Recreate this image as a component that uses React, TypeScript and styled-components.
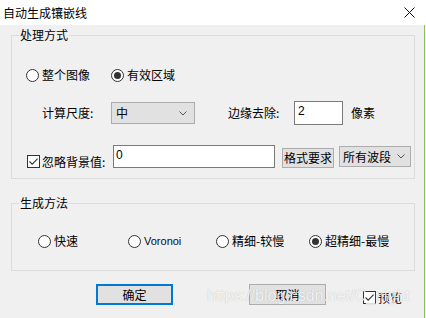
import React from 'react';
import styled, { createGlobalStyle } from 'styled-components';

const GlobalStyle = createGlobalStyle`
  html, body {
    margin: 0;
    padding: 0;
    background: #ffffff;
  }

  body {
    font-family: "Noto Sans CJK SC", "Microsoft YaHei", sans-serif;
    font-size: 12px;
    color: #000;
  }
`;

export default function App() {
  return (
    <Window>
      <GlobalStyle />

      {/* title bar */}
      <TitleBar>
        <Title>自动生成镶嵌线</Title>
        <svg width="11" height="11" viewBox="0 0 11 11">
          <path d="M0.5 0.5 L10.5 10.5 M10.5 0.5 L0.5 10.5" stroke="#111" strokeWidth="1" fill="none" />
        </svg>
      </TitleBar>

      <Body>
        {/* 处理方式 */}
        <Group>
          <Legend>处理方式</Legend>

          <Row $top={22} $height={20} $left={14}>
            <Option>
              <Radio />
              <Text>整个图像</Text>
            </Option>
            <Option $ml={21}>
              <Radio $checked />
              <Text>有效区域</Text>
            </Option>
          </Row>

          <Row $top={16} $height={24} $left={30}>
            <FieldLabel $w={69}>计算尺度:</FieldLabel>
            <Select $w={84} $h={22}>
              <span>中</span>
              <Chevron />
            </Select>
            <FieldLabel $w={66} $ml={33}>边缘去除:</FieldLabel>
            <TextBox $w={49} $h={24}>2</TextBox>
            <Text $ml={8}>像素</Text>
          </Row>

          <Row $top={20} $height={23} $left={15}>
            <CheckOption $drop={10}>
              <CheckBox checked />
              <FieldLabel $w={71}>忽略背景值:</FieldLabel>
            </CheckOption>
            <TextBox $w={162} $h={23} $pad={2}>0</TextBox>
            <SmallButton>格式要求</SmallButton>
            <Select $w={72} $h={21} $ml={5} $padL={3} $padR={5}>
              <span>所有波段</span>
              <Chevron />
            </Select>
          </Row>
        </Group>

        {/* 生成方法 */}
        <Group $mt={16} $pb={19}>
          <Legend>生成方法</Legend>
          <Row $top={20} $height={20} $left={26}>
            <Option $w={90}>
              <Radio />
              <Text>快速</Text>
            </Option>
            <Option $w={88}>
              <Radio />
              <Latin>Voronoi</Latin>
            </Option>
            <Option $w={93}>
              <Radio />
              <Text>精细-较慢</Text>
            </Option>
            <Option>
              <Radio $checked />
              <Text>超精细-最慢</Text>
            </Option>
          </Row>
        </Group>

        {/* buttons */}
        <Footer>
          <DialogButton $default>确定</DialogButton>
          <DialogButton $ml={76}>取消</DialogButton>
          <CheckOption $drop={6} $ml={37}>
            <CheckBox checked />
            <Text>预览</Text>
          </CheckOption>
        </Footer>
      </Body>

      <Watermark>https://blog.csdn.net/C_night</Watermark>
    </Window>
  );
}

function Radio({ $checked }: { $checked?: boolean }) {
  return <RadioCircle $checked={$checked} />;
}

function CheckBox({ checked }: { checked?: boolean }) {
  return (
    <CheckSquare>
      {checked && (
        <svg width="11" height="11" viewBox="0 0 11 11">
          <path d="M1.5 5.5 L4.2 8.2 L9.6 2.6" stroke="#333" strokeWidth="1.1" fill="none" />
        </svg>
      )}
    </CheckSquare>
  );
}

function Chevron() {
  return (
    <svg width="8" height="5" viewBox="0 0 8 5">
      <path d="M0.5 0.5 L4 4 L7.5 0.5" stroke="#555" strokeWidth="1" fill="none" />
    </svg>
  );
}

const Window = styled.div`
  position: relative;
  width: 425px;
  height: 318px;
  display: flex;
  flex-direction: column;
  overflow: hidden;
`;

const TitleBar = styled.div`
  flex: none;
  height: 25px;
  padding: 0 10px 0 3px;
  background: #ffffff;
  display: flex;
  align-items: center;
  justify-content: space-between;
`;

const Title = styled.span`
  font-size: 12px;
  line-height: 16px;
`;

const Body = styled.div`
  flex: 1;
  padding: 2px 0 0 11px;
  background: #f0f0f0;
  border-right: 1px solid #86c25a;
  display: flex;
  flex-direction: column;
`;

const Group = styled.fieldset<{ $mt?: number; $pb?: number }>`
  box-sizing: border-box;
  width: 404px;
  min-width: 0;
  margin: ${p => p.$mt || 0}px 0 0 0;
  padding: 0 0 ${p => (p.$pb === undefined ? 10 : p.$pb)}px 0;
  border: 1px solid #dcdcdc;
`;

const Legend = styled.legend`
  margin-left: 7px;
  padding: 0 1px;
  font-size: 12px;
  line-height: 16px;
`;

const Row = styled.div<{ $top: number; $height: number; $left: number }>`
  height: ${p => p.$height}px;
  margin-top: ${p => p.$top}px;
  padding-left: ${p => p.$left}px;
  display: flex;
  align-items: center;
`;

const Option = styled.label<{ $ml?: number; $w?: number }>`
  flex: none;
  width: ${p => (p.$w ? `${p.$w}px` : 'auto')};
  margin-left: ${p => p.$ml || 0}px;
  display: flex;
  align-items: center;
  gap: 3px;
`;

const CheckOption = styled.label<{ $drop?: number; $ml?: number }>`
  flex: none;
  margin-top: ${p => p.$drop || 0}px;
  margin-left: ${p => p.$ml || 0}px;
  display: flex;
  align-items: center;
  gap: 2px;
`;

const Text = styled.span<{ $ml?: number }>`
  margin-left: ${p => p.$ml || 0}px;
  font-size: 12px;
  line-height: 16px;
  white-space: nowrap;
`;

const Latin = styled.span`
  font-family: "Liberation Sans", Arial, sans-serif;
  font-size: 11px;
  line-height: 16px;
  color: #0a0a2a;
`;

const FieldLabel = styled.span<{ $w: number; $ml?: number }>`
  flex: none;
  width: ${p => p.$w}px;
  margin-left: ${p => p.$ml || 0}px;
  font-size: 12px;
  line-height: 16px;
  white-space: nowrap;
`;

const RadioCircle = styled.span<{ $checked?: boolean }>`
  flex: none;
  box-sizing: border-box;
  width: 13px;
  height: 13px;
  border: 1px solid #333;
  border-radius: 50%;
  background: #fff;
  display: flex;
  align-items: center;
  justify-content: center;

  &::after {
    content: '';
    width: 7px;
    height: 7px;
    border-radius: 50%;
    background: #333;
    display: ${p => (p.$checked ? 'block' : 'none')};
  }
`;

const CheckSquare = styled.span`
  flex: none;
  box-sizing: border-box;
  width: 13px;
  height: 13px;
  border: 1px solid #333;
  background: #fff;
  display: flex;
  align-items: center;
  justify-content: center;
`;

const Select = styled.div<{ $w: number; $h: number; $ml?: number; $padL?: number; $padR?: number }>`
  flex: none;
  box-sizing: border-box;
  width: ${p => p.$w}px;
  height: ${p => p.$h}px;
  margin-left: ${p => p.$ml || 0}px;
  padding: 0 ${p => (p.$padR === undefined ? 7 : p.$padR)}px 0 ${p => (p.$padL === undefined ? 4 : p.$padL)}px;
  border: 1px solid #adadad;
  background: #e1e1e1;
  display: flex;
  align-items: center;
  justify-content: space-between;
  font-size: 12px;
  line-height: 16px;
`;

const TextBox = styled.div<{ $w: number; $h: number; $pad?: number }>`
  flex: none;
  box-sizing: border-box;
  width: ${p => p.$w}px;
  height: ${p => p.$h}px;
  padding: 1px 0 0 ${p => (p.$pad === undefined ? 3 : p.$pad)}px;
  border: 1px solid #7a7a7a;
  background: #fff;
  font-family: "Liberation Sans", Arial, sans-serif;
  font-size: 12px;
  line-height: 16px;
  color: #000;
`;

const SmallButton = styled.div`
  flex: none;
  box-sizing: border-box;
  width: 52px;
  height: 20px;
  margin: 2px 0 0 7px;
  border: 1px solid #adadad;
  background: #e1e1e1;
  display: flex;
  align-items: center;
  justify-content: center;
  font-size: 12px;
  line-height: 16px;
`;

const Footer = styled.div`
  height: 21px;
  margin-top: 13px;
  padding-left: 85px;
  display: flex;
  align-items: center;
`;

const DialogButton = styled.div<{ $default?: boolean; $ml?: number }>`
  flex: none;
  box-sizing: border-box;
  width: 77px;
  height: 21px;
  margin-left: ${p => p.$ml || 0}px;
  border: ${p => (p.$default ? '2px solid #0078d7' : '1px solid #adadad')};
  background: #e1e1e1;
  display: flex;
  align-items: center;
  justify-content: center;
  font-size: 12px;
  line-height: 16px;
`;

const Watermark = styled.div`
  position: absolute;
  left: 207px;
  top: 287px;
  font-family: "Liberation Sans", Arial, sans-serif;
  font-size: 16px;
  line-height: 18px;
  color: rgba(255, 255, 255, 0.85);
  text-shadow: 0 0 1px rgba(0, 0, 0, 0.25);
  pointer-events: none;
  white-space: nowrap;
`;
